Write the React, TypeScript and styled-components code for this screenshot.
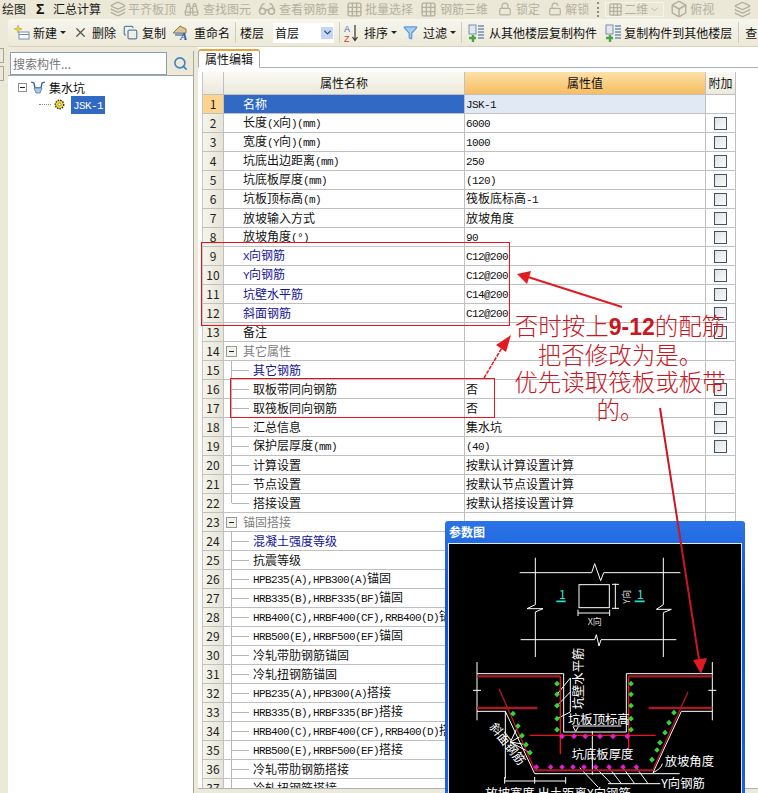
import React from "react";
import styled, { createGlobalStyle } from "styled-components";
import {
  Binoculars,
  Box,
  ChevronDown,
  Copy,
  Filter,
  Glasses,
  Grid3x3,
  Layers,
  Lock,
  LockOpen,
  Search,
  X,
} from "lucide-react";

const CJK = `"Noto Sans CJK SC", "Liberation Sans", sans-serif`;

const Global = createGlobalStyle`
  html, body { margin: 0; padding: 0; background: #ece9d8; }
  #root { width: 758px; height: 793px; overflow: hidden; position: relative; }
`;

const Page = styled.div`
  width: 758px;
  height: 793px;
  display: flex;
  flex-direction: column;
  background: #ece9d8;
  font: 12px/1 ${CJK};
  color: #111;
  overflow: hidden;
  position: relative;
`;

const MenuBar = styled.div`
  height: 18px;
  flex: none;
  display: flex;
  align-items: center;
  overflow: hidden;
  white-space: nowrap;
  background: #ebe8d7;
`;

const MenuItem = styled.span<{ $ml?: number; $off?: boolean }>`
  display: inline-flex;
  align-items: center;
  flex: none;
  margin-left: ${(p) => p.$ml ?? 0}px;
  color: ${(p) => (p.$off ? "#b3b1a0" : "#1a1a1a")};
`;

const Sigma = styled.span`
  font: bold 14px "Liberation Sans", sans-serif;
  margin-left: 10px;
  width: 17px;
`;

const DotSep = styled.span`
  width: 0;
  height: 15px;
  margin-left: 8px;
  border-left: 2px dotted #8d8b7b;
`;

const ViewSelect = styled.span`
  width: 59px;
  height: 15px;
  margin-left: 6px;
  padding-left: 2px;
  display: flex;
  align-items: center;
  gap: 1px;
  box-sizing: border-box;
  border: 1px solid #f6f5ec;
  color: #b3b1a0;
  flex: none;
`;

const ToolBar = styled.div`
  height: 28px;
  flex: none;
  margin: 1px 0 0 8px;
  display: flex;
  align-items: center;
  white-space: nowrap;
  overflow: hidden;
  background: linear-gradient(#f7f6ee, #ece9d8);
  border-radius: 3px 0 0 3px;
  border-bottom: 1px solid #d5d2c0;
  box-sizing: border-box;
`;

const Tool = styled.span<{ $ml?: number }>`
  display: inline-flex;
  align-items: center;
  flex: none;
  margin-left: ${(p) => p.$ml ?? 0}px;
`;

const Caret = styled.span`
  width: 0;
  height: 0;
  margin-left: 3px;
  border: 3px solid transparent;
  border-top: 3px solid #222;
  border-bottom: 0;
`;

const ToolSep = styled.span<{ $ml?: number }>`
  width: 1px;
  height: 21px;
  flex: none;
  margin-left: ${(p) => p.$ml ?? 6}px;
  background: #cfccba;
`;

const FloorSelect = styled.span`
  width: 61px;
  height: 20px;
  margin-left: 9px;
  padding-left: 2px;
  flex: none;
  display: flex;
  align-items: center;
  justify-content: space-between;
  box-sizing: border-box;
  background: #fff;
`;

const SelectArrow = styled.span`
  width: 12px;
  height: 12px;
  margin-right: 1px;
  display: flex;
  align-items: center;
  justify-content: center;
  background: #c5d6f4;
  color: #2b4a8c;
`;

const Body = styled.div`
  flex: 1;
  min-height: 0;
  display: flex;
`;

const Dock = styled.div`
  width: 4px;
  flex: none;
  padding-top: 1px;
`;

const DockTab = styled.div`
  height: 13px;
  margin-bottom: 3px;
  border: 1px solid #a7a594;
  border-left: 0;
`;

const Sidebar = styled.aside`
  width: 185px;
  flex: none;
  margin: 4px 0 0 4px;
  display: flex;
  flex-direction: column;
  border-right: 1px solid #a7a99f;
  background: #fff;
`;

const SearchRow = styled.div`
  height: 25px;
  flex: none;
  display: flex;
  background: #ece9d8;
  border-bottom: 1px solid #a7a99f;
  padding: 1px 0 0 2px;
  box-sizing: border-box;
`;

const SearchInput = styled.div`
  width: 157px;
  height: 23px;
  box-sizing: border-box;
  border: 1px solid #8aa0b8;
  background: #fff;
  color: #777;
  display: flex;
  align-items: center;
  padding-left: 2px;
`;

const SearchBtn = styled.div`
  flex: 1;
  display: flex;
  align-items: center;
  justify-content: center;
  color: #3f83c4;
`;

const Tree = styled.div`
  flex: 1;
  padding-top: 3px;
`;

const TreeRow = styled.div<{ $indent: number }>`
  height: 17px;
  display: flex;
  align-items: center;
  padding-left: ${(p) => p.$indent}px;
  gap: 3px;
`;

const PlusBox = styled.span`
  width: 9px;
  height: 9px;
  box-sizing: border-box;
  border: 1px solid #8f8f8f;
  background: #fff;
  display: flex;
  align-items: center;
  justify-content: center;
  flex: none;
  &::before {
    content: "";
    width: 5px;
    height: 1px;
    background: #222;
  }
`;

const Dotted = styled.span`
  width: 12px;
  border-top: 1px dotted #888;
  flex: none;
`;

const Selected = styled.span`
  background: #316ac5;
  color: #fff;
  padding: 2px;
  margin-left: 3px;
`;

const Main = styled.main`
  flex: 1;
  min-width: 0;
  display: flex;
  flex-direction: column;
  margin-left: 4px;
`;

const TabStrip = styled.div`
  height: 20px;
  flex: none;
  display: flex;
  align-items: flex-end;
  background: #fff;
  border-bottom: 1px solid #a9b2bd;
`;

const Tab = styled.div`
  width: 62px;
  height: 19px;
  box-sizing: border-box;
  margin-bottom: -1px;
  border: 1px solid #a9a99a;
  border-top: 2px solid #e8a33a;
  border-bottom: 1px solid #fff;
  border-radius: 3px 3px 0 0;
  background: #fff;
  display: flex;
  align-items: center;
  justify-content: center;
`;

const Panel = styled.div`
  height: 721px;
  flex: none;
  background: #fff;
  padding: 4px 0 0 4px;
  box-sizing: border-box;
  overflow: hidden;
  border-bottom: 1px solid #a9b2bd;
`;

const Grid = styled.div`
  width: 534px;
  display: grid;
  grid-template-columns: 21px 241px 241px 30px;
  grid-template-rows: 23px;
  grid-auto-rows: 19px;
  border-left: 1px solid #c6c6c6;
`;

const Cell = styled.div`
  box-sizing: border-box;
  border-right: 1px solid #c0c0c0;
  border-bottom: 1px solid #c0c0c0;
  display: flex;
  align-items: center;
  white-space: nowrap;
  overflow: hidden;
`;

const HeadCell = styled(Cell)<{ $hot?: boolean }>`
  justify-content: center;
  background: ${(p) =>
    p.$hot
      ? "linear-gradient(#fde0a8, #f6bd62)"
      : "linear-gradient(#fbfaf3, #ece9dc)"};
`;

const NumCell = styled(Cell)<{ $active?: boolean }>`
  justify-content: center;
  background: ${(p) =>
    p.$active ? "#fcd38f" : "linear-gradient(90deg, #f6f5ec, #e6e4d6)"};
  color: #222;
`;

const NameCell = styled(Cell)<{ $active?: boolean; $tone?: string; $indent: number }>`
  position: relative;
  padding-left: ${(p) => p.$indent}px;
  background: ${(p) => (p.$active ? "#316ac5" : "#fff")};
  color: ${(p) => (p.$active ? "#fff" : p.$tone ?? "#111")};
`;

const ValueCell = styled(Cell)<{ $active?: boolean }>`
  padding-left: 1px;
  background: ${(p) => (p.$active ? "#e1e9f5" : "#fff")};
`;

const CheckCell = styled(Cell)`
  justify-content: center;
`;

const CheckBox = styled.span`
  width: 13px;
  height: 13px;
  box-sizing: border-box;
  border: 1px solid #3f5266;
  background: linear-gradient(135deg, #dfe3e6, #fbfbf8);
`;

const GroupBox = styled(PlusBox)`
  width: 11px;
  height: 11px;
  margin-right: 6px;
  border-color: #999;
  background: #f2f2ea;
  position: absolute;
  left: 2px;
  top: 4px;
`;

const TreeStem = styled.span<{ $last?: boolean }>`
  position: absolute;
  left: 7px;
  top: 0;
  bottom: ${(p) => (p.$last ? "9px" : "-1px")};
  width: 17px;
  border-left: 1px solid #b5b5b5;
  &::after {
    content: "";
    position: absolute;
    left: 0;
    right: 0;
    top: 9px;
    border-top: 1px solid #b5b5b5;
  }
`;

const Latin = styled.span`
  font: 11px/1 "Liberation Mono", monospace;
  letter-spacing: -0.6px;
`;

const RedFrame = styled.div<{ $x: number; $y: number; $w: number; $h: number }>`
  position: absolute;
  left: ${(p) => p.$x}px;
  top: ${(p) => p.$y}px;
  width: ${(p) => p.$w}px;
  height: ${(p) => p.$h}px;
  box-sizing: border-box;
  border: 1px solid #f0101a;
`;

const Note = styled.div`
  position: absolute;
  left: 505px;
  top: 312px;
  width: 230px;
  color: #c9161f;
  font: 23.5px/27.3px ${CJK};
  font-weight: 300;
  text-align: center;
  white-space: nowrap;
`;

const NoteNum = styled.b`
  font: bold 23px/27px "Liberation Sans", sans-serif;
`;

const ArrowLayer = styled.svg`
  position: absolute;
  left: 0;
  top: 0;
  pointer-events: none;
`;

const Dialog = styled.section`
  position: absolute;
  left: 445px;
  top: 521px;
  width: 300px;
  height: 272px;
  box-sizing: border-box;
  padding: 0 3px;
  background: linear-gradient(#2b73e6, #0d55d8 30%, #1a62e2);
  border-radius: 3px 3px 0 0;
  overflow: hidden;
`;

const DialogTitle = styled.h2`
  margin: 0;
  height: 22px;
  display: flex;
  align-items: center;
  padding-left: 1px;
  color: #fff;
  font: bold 12px/1 ${CJK};
`;

const DialogCanvas = styled.div`
  border: 1px solid #dfe9f7;
  background: #000;
  height: 260px;
  box-sizing: border-box;
`;

const DrawText = styled.text`
  fill: #fff;
  font-family: ${CJK};
  font-size: 37px;
`;

type Row = {
  name: string;
  value?: string;
  tone?: "blue" | "grey";
  group?: boolean;
  tree?: boolean;
  check?: boolean;
  last?: boolean;
};

const rows: Row[] = [
  { name: "名称", value: "JSK-1" },
  { name: "长度(X向)(mm)", value: "6000", check: true },
  { name: "宽度(Y向)(mm)", value: "1000", check: true },
  { name: "坑底出边距离(mm)", value: "250", check: true },
  { name: "坑底板厚度(mm)", value: "(120)", check: true },
  { name: "坑板顶标高(m)", value: "筏板底标高-1", check: true },
  { name: "放坡输入方式", value: "放坡角度", check: true },
  { name: "放坡角度(°)", value: "90", check: true },
  { name: "X向钢筋", value: "C12@200", tone: "blue", check: true },
  { name: "Y向钢筋", value: "C12@200", tone: "blue", check: true },
  { name: "坑壁水平筋", value: "C14@200", tone: "blue", check: true },
  { name: "斜面钢筋", value: "C12@200", tone: "blue", check: true },
  { name: "备注", check: true },
  { name: "其它属性", tone: "grey", group: true },
  { name: "其它钢筋", tone: "blue", tree: true },
  { name: "取板带同向钢筋", value: "否", tree: true, check: true },
  { name: "取筏板同向钢筋", value: "否", tree: true, check: true },
  { name: "汇总信息", value: "集水坑", tree: true, check: true },
  { name: "保护层厚度(mm)", value: "(40)", tree: true, check: true },
  { name: "计算设置", value: "按默认计算设置计算", tree: true },
  { name: "节点设置", value: "按默认节点设置计算", tree: true },
  { name: "搭接设置", value: "按默认搭接设置计算", tree: true, last: true },
  { name: "锚固搭接", tone: "grey", group: true },
  { name: "混凝土强度等级", tone: "blue", tree: true },
  { name: "抗震等级", tree: true },
  { name: "HPB235(A),HPB300(A)锚固", tree: true },
  { name: "HRB335(B),HRBF335(BF)锚固", tree: true },
  { name: "HRB400(C),HRBF400(CF),RRB400(D)锚固", tree: true },
  { name: "HRB500(E),HRBF500(EF)锚固", tree: true },
  { name: "冷轧带肋钢筋锚固", tree: true },
  { name: "冷轧扭钢筋锚固", tree: true },
  { name: "HPB235(A),HPB300(A)搭接", tree: true },
  { name: "HRB335(B),HRBF335(BF)搭接", tree: true },
  { name: "HRB400(C),HRBF400(CF),RRB400(D)搭接", tree: true },
  { name: "HRB500(E),HRBF500(EF)搭接", tree: true },
  { name: "冷轧带肋钢筋搭接", tree: true },
  { name: "冷轧扭钢筋搭接", tree: true },
];

// SimSun style half width latin next to the CJK glyphs
function Mixed({ text }: { text: string }) {
  const parts = text.split(/([\x20-\x7e°]+)/).filter(Boolean);
  return (
    <span>
      {parts.map((part, i) =>
        /^[\x20-\x7e°]+$/.test(part) ? <Latin key={i}>{part}</Latin> : <span key={i}>{part}</span>
      )}
    </span>
  );
}

function NewIcon() {
  return (
    <svg width="17" height="15" viewBox="0 0 17 15">
      <rect x="6" y="7" width="10" height="7" fill="#fff" stroke="#6d8fb8" />
      <path d="M6 9.5h10" stroke="#6d8fb8" />
      <path d="M5 0l1 3 3 1-3 1-1 3-1-3-3-1 3-1z" fill="#f2cf3a" stroke="#b89a20" strokeWidth=".5" />
    </svg>
  );
}

function RenameIcon() {
  return (
    <svg width="18" height="17" viewBox="0 0 18 17">
      <path d="M1 9L8 2l6 3v4z" fill="#d9c690" stroke="#8b7a4c" />
      <path d="M3 9h9v3H3z" fill="#7fa0c0" />
      <text x="8" y="16" fontFamily="Liberation Serif" fontStyle="italic" fontWeight="bold" fontSize="11" fill="#2a5a9c">
        A
      </text>
    </svg>
  );
}

function SortIcon() {
  return (
    <svg width="15" height="20" viewBox="0 0 15 20">
      <text x="0" y="9" fontFamily="Liberation Sans" fontSize="9" fill="#3a68b0">A</text>
      <text x="0" y="19" fontFamily="Liberation Sans" fontSize="9" fill="#b5453a">Z</text>
      <path d="M11 2v15M8.5 14l2.5 3.5 2.500-3.500" fill="none" stroke="#333" strokeWidth="1.2" />
    </svg>
  );
}

function FloorCopyIcon() {
  return (
    <svg width="17" height="20" viewBox="0 0 17 20">
      <rect x="1" y="2" width="7" height="9" fill="#dfe7f2" stroke="#7b8ea8" />
      <path d="M10 3h6M10 6h6M10 9h6M10 12h6M10 15h6" stroke="#6f8fb5" strokeWidth="1.400" />
      <path d="M1 15h7M5 12v7" stroke="#46a546" strokeWidth="2.400" />
    </svg>
  );
}

function PitIcon() {
  return (
    <svg width="16" height="15" viewBox="0 0 16 15">
      <path d="M1 2l3 1 1 5h6l1-5 3-1" fill="none" stroke="#2a5a9c" strokeWidth="1.300" />
      <path d="M4 8h8l-2 5H6z" fill="#a9c6e8" stroke="#6f8fb5" />
    </svg>
  );
}

function GearIcon() {
  return (
    <svg width="11" height="11" viewBox="0 0 11 11">
      <circle cx="5.500" cy="5.500" r="4.200" fill="#f4de1c" stroke="#333" strokeDasharray="1.500 1" strokeWidth="1.500" />
      <circle cx="5.500" cy="5.500" r="1.500" fill="#fffbe0" stroke="#555" strokeWidth=".6" />
    </svg>
  );
}

const greenDots = [
  [352, 505], [352, 537], [352, 571], [352, 610], [352, 643],
  [574, 505], [574, 537], [574, 571], [574, 610], [574, 643],
  [220, 595], [235, 632], [247, 661], [259, 688], [271, 712],
  [703, 592], [688, 622], [676, 652], [661, 682], [652, 704], [637, 733],
];

const pinkDots = [
  [367, 663], [403, 663], [437, 663], [481, 663], [520, 663], [563, 663],
  [290, 755], [333, 755], [367, 755], [400, 755], [433, 755], [468, 755], [508, 755], [550, 755], [590, 755],
];

// coordinates in this drawing are 3x page pixels
function PitDrawing() {
  return (
    <svg width="291" height="249" viewBox="28 86 873 747" style={{ display: "block" }}>
      <g fill="none" stroke="#fff" strokeWidth="3">
        <path d="M240 172H456L465 145 483 196 492 172H722" />
        <path d="M243 373H465L470 358 478 392 484 373H710" />
        <path d="M287 127V268L262 280H310L287 290V425" />
        <path d="M671 127V268L650 282H695L671 292V425" />
        <rect x="418" y="208" width="91" height="69" />
        <path d="M527 205V281M517 207H538M517 279H538M415 293H510M415 283V302M510 283V302" />
        <path d="M112 440V615M818 440V615M100 525H124M806 525H830" />
        <path d="M112 475H372V650H560V475H818" />
        <path d="M112 588H197L285 775H720M818 588H725L640 772" />
        <path d="M197 588V790M195 797H378M195 785V805M285 785V805M378 785V805" />
        <path d="M352 537L392 488V590M352 571L392 530M352 610L392 590" />
        <path d="M458 648V778M400 632H545M400 634L408 648 416 634" />
        <path d="M420 757L475 815M468 757L515 805M508 757L545 805M550 757L585 805M590 757L625 805H662" />
        <path d="M505 805H625M235 632L212 680M247 661L212 680M259 688L212 680M271 712L212 680" />
        <path d="M640 772Q665 760 668 745" />
      </g>
      <g fill="none" strokeLinecap="butt">
        <path d="M112 483H362M567 483H818M112 578H293M627 578H818M285 765H640" stroke="#a51d24" strokeWidth="7" />
        <path d="M178 520L285 763M745 530L640 763" stroke="#b5161c" strokeWidth="4" />
        <path d="M362 483V716M567 483V700M270 660H648" stroke="#f01018" strokeWidth="4" />
      </g>
      {greenDots.map(([x, y]) => (
        <rect key={`${x}-${y}`} x={x - 6} y={y - 6} width="12" height="12" fill="#35d435" transform={`rotate(45 ${x} ${y})`} />
      ))}
      {pinkDots.map(([x, y]) => (
        <rect key={`${x}-${y}`} x={x - 6} y={y - 6} width="12" height="12" fill="#e020d0" transform={`rotate(45 ${x} ${y})`} />
      ))}
      <path d="M350 258H378M585 258H615" stroke="#20e0d0" strokeWidth="5" />
      <DrawText x="358" y="252" fontSize="34" style={{ fill: "#30e0d0" }}>1</DrawText>
      <DrawText x="592" y="252" fontSize="34" style={{ fill: "#30e0d0" }}>1</DrawText>
      <DrawText x="444" y="330" style={{ fontSize: 27, fill: "#ddd" }}>X向</DrawText>
      <DrawText transform="translate(570 265) rotate(-90)" style={{ fontSize: 27, fill: "#ddd" }}>Y向</DrawText>
      <DrawText transform="translate(431 582) rotate(-90)">坑壁水平筋</DrawText>
      <DrawText x="385" y="627">坑板顶标高</DrawText>
      <DrawText x="396" y="732">坑底板厚度</DrawText>
      <DrawText x="675" y="752">放坡角度</DrawText>
      <DrawText x="665" y="817">Y向钢筋</DrawText>
      <DrawText transform="translate(148 635) rotate(52)">斜面钢筋</DrawText>
      <DrawText x="137" y="847">放坡宽度 出土距离X向钢筋</DrawText>
    </svg>
  );
}

export default function App() {
  return (
    <Page>
      <Global />
      <MenuBar>
        <MenuItem $ml={2}>绘图</MenuItem>
        <Sigma>Σ</Sigma>
        <MenuItem>汇总计算</MenuItem>
        <MenuItem $ml={9} $off><Layers size={16} /></MenuItem>
        <MenuItem $ml={2} $off>平齐板顶</MenuItem>
        <MenuItem $ml={8} $off><Binoculars size={15} /></MenuItem>
        <MenuItem $ml={4} $off>查找图元</MenuItem>
        <MenuItem $ml={7} $off><Glasses size={18} /></MenuItem>
        <MenuItem $ml={3} $off>查看钢筋量</MenuItem>
        <MenuItem $ml={7} $off><Grid3x3 size={17} /></MenuItem>
        <MenuItem $ml={2} $off>批量选择</MenuItem>
        <MenuItem $ml={7} $off><Grid3x3 size={17} /></MenuItem>
        <MenuItem $ml={3} $off>钢筋三维</MenuItem>
        <MenuItem $ml={10} $off><Lock size={14} /></MenuItem>
        <MenuItem $ml={4} $off>锁定</MenuItem>
        <MenuItem $ml={8} $off><LockOpen size={14} /></MenuItem>
        <MenuItem $ml={3} $off>解锁</MenuItem>
        <DotSep />
        <ViewSelect><Grid3x3 size={15} />二维<ChevronDown size={11} /></ViewSelect>
        <MenuItem $ml={6} $off><Box size={18} /></MenuItem>
        <MenuItem $ml={2} $off>俯视</MenuItem>
        <MenuItem $ml={20} $off><Layers size={17} /></MenuItem>
      </MenuBar>
      <ToolBar>
        <Tool $ml={5}><NewIcon /></Tool>
        <Tool $ml={3}>新建<Caret /></Tool>
        <Tool $ml={7}><X size={15} color="#555" /></Tool>
        <Tool $ml={4}>删除</Tool>
        <Tool $ml={7}><Copy size={15} color="#5f7fa8" /></Tool>
        <Tool $ml={4}>复制</Tool>
        <Tool $ml={6}><RenameIcon /></Tool>
        <Tool $ml={4}>重命名</Tool>
        <ToolSep $ml={5} />
        <Tool $ml={4}>楼层</Tool>
        <FloorSelect>首层<SelectArrow><ChevronDown size={11} strokeWidth={3} /></SelectArrow></FloorSelect>
        <ToolSep $ml={5} />
        <Tool $ml={4}><SortIcon /></Tool>
        <Tool $ml={5}>排序<Caret /></Tool>
        <Tool $ml={6}><Filter size={15} color="#5b9bd5" fill="#a8cdf0" /></Tool>
        <Tool $ml={5}>过滤<Caret /></Tool>
        <ToolSep $ml={5} />
        <Tool $ml={6}><FloorCopyIcon /></Tool>
        <Tool $ml={4}>从其他楼层复制构件</Tool>
        <Tool $ml={8}><FloorCopyIcon /></Tool>
        <Tool $ml={2}>复制构件到其他楼层</Tool>
        <ToolSep $ml={6} />
        <Tool $ml={6}>查</Tool>
      </ToolBar>
      <Body>
        <Dock>
          <DockTab />
          <DockTab />
        </Dock>
        <Sidebar>
          <SearchRow>
            <SearchInput>搜索构件...</SearchInput>
            <SearchBtn><Search size={15} strokeWidth={2.5} /></SearchBtn>
          </SearchRow>
          <Tree>
            <TreeRow $indent={10}>
              <PlusBox />
              <PitIcon />
              <span>集水坑</span>
            </TreeRow>
            <TreeRow $indent={31}>
              <Dotted />
              <GearIcon />
              <Selected><Latin>JSK-1</Latin></Selected>
            </TreeRow>
          </Tree>
        </Sidebar>
        <Main>
          <TabStrip>
            <Tab>属性编辑</Tab>
          </TabStrip>
          <Panel>
            <Grid>
              <HeadCell />
              <HeadCell>属性名称</HeadCell>
              <HeadCell $hot>属性值</HeadCell>
              <HeadCell>附加</HeadCell>
              {rows.map((row, i) => {
                const active = i === 0;
                const tone = row.tone === "blue" ? "#12129c" : row.tone === "grey" ? "#808080" : undefined;
                return (
                  <React.Fragment key={row.name}>
                    <NumCell $active={active}>{i + 1}</NumCell>
                    <NameCell $active={active} $tone={tone} $indent={row.tree ? 29 : 19}>
                      {row.group && <GroupBox />}
                      {row.tree && <TreeStem $last={row.last} />}
                      <Mixed text={row.name} />
                    </NameCell>
                    <ValueCell $active={active}>{row.value && <Mixed text={row.value} />}</ValueCell>
                    <CheckCell>{row.check && <CheckBox />}</CheckCell>
                  </React.Fragment>
                );
              })}
            </Grid>
          </Panel>
        </Main>
      </Body>

      <Dialog>
        <DialogTitle>参数图</DialogTitle>
        <DialogCanvas>
          <PitDrawing />
        </DialogCanvas>
      </Dialog>

      <RedFrame $x={201} $y={242} $w={309} $h={84} />
      <RedFrame $x={230} $y={378} $w={265} $h={40} />
      <Note>
        <div>否时按上<NoteNum>9-12</NoteNum>的配筋</div>
        <div>把否修改为是。</div>
        <div>优先读取筏板或板带</div>
        <div>的。</div>
      </Note>
      <ArrowLayer width="758" height="793" viewBox="0 0 758 793">
        <path d="M622 307L528 277" stroke="#e21b22" strokeWidth="2" />
        <path d="M517 274L531 271 527 284z" fill="#e21b22" />
        <path d="M484 378L503 346" stroke="#e21b22" strokeWidth="1.500" strokeDasharray="4 1" />
        <path d="M511 335L496 345 506 352z" fill="#e21b22" />
        <path d="M660 408L699 660" stroke="#cc1620" strokeWidth="2" />
        <path d="M693 660L707 658 701 674z" fill="#e21b22" />
      </ArrowLayer>
    </Page>
  );
}
